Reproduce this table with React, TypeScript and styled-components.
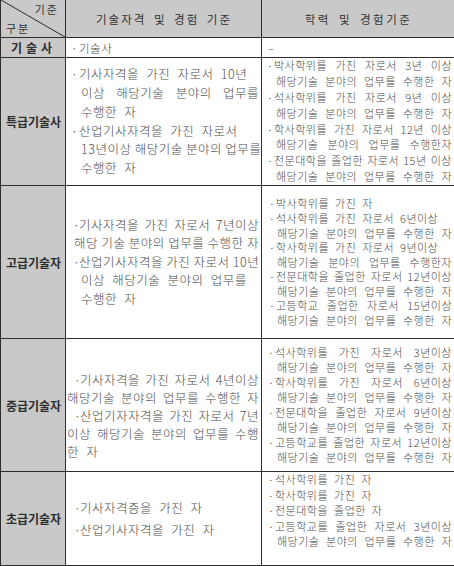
import React from "react";
import styled, { createGlobalStyle } from "styled-components";

const GlobalStyle = createGlobalStyle`
  html, body {
    margin: 0;
    padding: 0;
    background: #fff;
  }
  body {
    font-family: "Noto Sans CJK KR", "Noto Sans", sans-serif;
    color: #4a4a4a;
  }
`;

const Table = styled.table`
  width: 454px;
  border-collapse: collapse;
  table-layout: fixed;

  tr:first-child td {
    border-top: 0;
  }
`;

const Col = styled.col<{ $w: number }>`
  width: ${({ $w }) => $w}px;
`;

const Row = styled.tr<{ $h: number }>`
  height: ${({ $h }) => $h}px;
`;

const Cell = styled.td<{ $shade?: boolean; $pt?: number; $pb?: number; $top?: boolean }>`
  border: 1px solid #2e2e2e;
  padding: ${({ $pt }) => $pt || 0}px 0 ${({ $pb }) => $pb || 0}px 1px;
  background: ${({ $shade }) => ($shade ? "#c9c9c9" : "#fff")};
  vertical-align: ${({ $top }) => ($top ? "top" : "middle")};
  overflow: hidden;
`;

const CornerCell = styled.td`
  position: relative;
  border: 1px solid #2e2e2e;
  border-top: 0;
  padding: 0;
  background: #c9c9c9;
`;

const Diagonal = styled.svg`
  position: absolute;
  inset: 0;
  width: 100%;
  height: 100%;
`;

const Corner = styled.div`
  position: relative;
  display: flex;
  flex-direction: column;
  justify-content: space-between;
  height: 37px;
  padding: 2px 6px 1px 5px;
  box-sizing: border-box;
  font-size: 11px;
  letter-spacing: 2px;
  color: #333;
  line-height: 15px;
`;

const CornerTop = styled.span`
  align-self: flex-end;
`;

const CornerBottom = styled.span`
  align-self: flex-start;
`;

const HeadText = styled.div<{ $spacing: number }>`
  text-align: center;
  font-size: 11.5px;
  letter-spacing: ${({ $spacing }) => $spacing}px;
  word-spacing: 3px;
  color: #333;
`;

const Label = styled.div<{ $spacing?: number }>`
  text-align: center;
  font-size: 12px;
  font-weight: 700;
  color: #2e2e2e;
  letter-spacing: ${({ $spacing }) => $spacing || 0}px;
  white-space: nowrap;
`;

const Block = styled.div<{ $size: number; $lh: number; $ws: number; $ls: number }>`
  font-size: ${({ $size }) => $size}px;
  line-height: ${({ $lh }) => $lh}px;
  word-spacing: ${({ $ws }) => $ws}px;
  letter-spacing: ${({ $ls }) => $ls}px;
  font-weight: 300;
  color: #4d4d4d;
`;

const FirstLine = styled.div<{ $dot: number }>`
  display: flex;
  padding-left: ${({ $dot }) => $dot}px;
  padding-right: 2px;
`;

const Dot = styled.span<{ $w: number }>`
  flex: none;
  width: ${({ $w }) => $w}px;
  letter-spacing: 0;
`;

const NextLine = styled.div<{ $indent: number }>`
  display: flex;
  padding-left: ${({ $indent }) => $indent}px;
  padding-right: 2px;
`;

const Text = styled.span<{ $full?: boolean }>`
  flex: 1;
  min-width: 0;
  white-space: nowrap;
  ${({ $full }) =>
    $full
      ? `
    word-spacing: 0;
    text-align: justify;
    text-align-last: justify;
  `
      : `
    text-align: left;
  `}
`;

type Line = { t: string; full?: boolean };
type Item = { lines: Line[]; cont?: number };

const L = (t: string, full = false): Line => ({ t, full });

type EntriesProps = {
  items: Item[];
  size: number;
  lh: number;
  ws: number;
  ls: number;
  dot: number;
  text: number;
  cont: number;
};

function Entries({ items, size, lh, ws, ls, dot, text, cont }: EntriesProps) {
  return (
    <Block $size={size} $lh={lh} $ws={ws} $ls={ls}>
      {items.map((item, k) => (
        <React.Fragment key={k}>
          {item.lines.map((ln, i) =>
            i === 0 ? (
              <FirstLine key={i} $dot={dot}>
                <Dot $w={text - dot}>·</Dot>
                <Text $full={ln.full}>{ln.t}</Text>
              </FirstLine>
            ) : (
              <NextLine key={i} $indent={item.cont ?? cont}>
                <Text $full={ln.full}>{ln.t}</Text>
              </NextLine>
            )
          )}
        </React.Fragment>
      ))}
    </Block>
  );
}

const SUFFIX = "해당기술 분야의 업무를 수행한 자";

// shared type settings for the two content columns
const QUAL = { size: 12.5, ws: 4, ls: 0.5 };
const EDU = { size: 11, ws: 3, ls: 0.5 };

export default function App() {
  return (
    <>
      <GlobalStyle />
      <Table>
        <colgroup>
          <Col $w={65} />
          <Col $w={196} />
          <Col $w={193} />
        </colgroup>
        <tbody>
          <Row $h={37}>
            <CornerCell>
              <Diagonal viewBox="0 0 64 37" preserveAspectRatio="none">
                <line x1="0" y1="0" x2="64" y2="37" stroke="#2a2a2a" strokeWidth="1" />
              </Diagonal>
              <Corner>
                <CornerTop>기준</CornerTop>
                <CornerBottom>구분</CornerBottom>
              </Corner>
            </CornerCell>
            <Cell $shade>
              <HeadText $spacing={2}>기술자격 및 경험 기준</HeadText>
            </Cell>
            <Cell $shade>
              <HeadText $spacing={2.5}>학력 및 경험기준</HeadText>
            </Cell>
          </Row>

          <Row $h={20}>
            <Cell $shade>
              <Label $spacing={4}>기술사</Label>
            </Cell>
            <Cell>
              <Entries items={[{ lines: [L("기술사")] }]} size={11.5} lh={18} ws={3} ls={0.5} dot={4} text={12} cont={14} />
            </Cell>
            <Cell>
              <Block $size={11} $lh={18} $ws={0} $ls={0}>
                <NextLine $indent={5}>
                  <Text>–</Text>
                </NextLine>
              </Block>
            </Cell>
          </Row>

          <Row $h={128}>
            <Cell $shade>
              <Label>특급기술사</Label>
            </Cell>
            <Cell>
              <Entries
                {...QUAL}
                lh={18.8}
                dot={4}
                text={12}
                cont={14}
                items={[
                  { lines: [L("기사자격을 가진 자로서 10년"), L("이상 해당기술 분야의 업무를", true), L("수행한 자")] },
                  { lines: [L("산업기사자격을 가진 자로서"), L("13년이상 해당기술 분야의 업무를", true), L("수행한 자")] },
                ]}
              />
            </Cell>
            <Cell>
              <Entries
                {...EDU}
                lh={15.8}
                dot={4}
                text={11}
                cont={13}
                items={[
                  { lines: [L("박사학위를 가진 자로서 3년 이상", true), L(SUFFIX, true)] },
                  { lines: [L("석사학위를 가진 자로서 9년 이상", true), L(SUFFIX, true)] },
                  { lines: [L("학사학위를 가진 자로서 12년 이상", true), L("해당기술 분야의 업무를 수행한자", true)] },
                  { lines: [L("전문대학을 졸업한 자로서 15년 이상", true), L(SUFFIX, true)] },
                ]}
              />
            </Cell>
          </Row>

          <Row $h={153}>
            <Cell $shade>
              <Label>고급기술자</Label>
            </Cell>
            <Cell>
              <Entries
                {...QUAL}
                lh={18.5}
                dot={6}
                text={12}
                cont={14}
                items={[
                  { lines: [L("기사자격을 가진 자로서 7년이상", true), L("해당 기술 분야의 업무를 수행한 자", true)], cont: 7 },
                  { lines: [L("산업기사자격을 가진 자로서 10년", true), L("이상 해당기술 분야의 업무를"), L("수행한 자")] },
                ]}
              />
            </Cell>
            <Cell>
              <Entries
                {...EDU}
                lh={14.6}
                dot={6}
                text={13}
                cont={14}
                items={[
                  { lines: [L("박사학위를 가진 자")] },
                  { lines: [L("석사학위를 가진 자로서 6년이상"), L(SUFFIX, true)] },
                  { lines: [L("학사학위를 가진 자로서 9년이상"), L("해당기술 분야의 업무를 수행한자", true)] },
                  { lines: [L("전문대학을 졸업한 자로서 12년이상", true), L(SUFFIX, true)] },
                  { lines: [L("고등학교 졸업한 자로서 15년이상", true), L(SUFFIX, true)] },
                ]}
              />
            </Cell>
          </Row>

          <Row $h={133}>
            <Cell $shade>
              <Label>중급기술자</Label>
            </Cell>
            <Cell $pt={22}>
              <Entries
                {...QUAL}
                lh={18}
                dot={7}
                text={13}
                cont={0}
                items={[
                  { lines: [L("기사자격을 가진 자로서 4년이상", true), L(SUFFIX, true)] },
                  { lines: [L("산업기자자격을 가진 자로서 7년", true), L("이상 해당기술 분야의 업무를 수행", true), L("한 자")] },
                ]}
              />
            </Cell>
            <Cell>
              <Entries
                {...EDU}
                lh={14.9}
                dot={5}
                text={12}
                cont={14}
                items={[
                  { lines: [L("석사학위를 가진 자로서 3년이상", true), L(SUFFIX, true)] },
                  { lines: [L("학사학위를 가진 자로서 6년이상", true), L(SUFFIX, true)] },
                  { lines: [L("전문대학을 졸업한 자로서 9년이상", true), L(SUFFIX, true)] },
                  { lines: [L("고등학교를 졸업한 자로서 12년이상", true), L(SUFFIX, true)] },
                ]}
              />
            </Cell>
          </Row>

          <Row $h={94}>
            <Cell $shade>
              <Label>초급기술자</Label>
            </Cell>
            <Cell>
              <Entries
                {...QUAL}
                lh={22}
                dot={7}
                text={13}
                cont={14}
                items={[{ lines: [L("기사자격증을 가진 자")] }, { lines: [L("산업기사자격을 가진 자")] }]}
              />
            </Cell>
            <Cell $top>
              <Entries
                {...EDU}
                lh={15.5}
                dot={5}
                text={12}
                cont={14}
                items={[
                  { lines: [L("석사학위를 가진 자")] },
                  { lines: [L("학사학위를 가진 자")] },
                  { lines: [L("전문대학을 졸업한 자")] },
                  { lines: [L("고등학교를 졸업한 자로서 3년이상", true), L(SUFFIX, true)] },
                ]}
              />
            </Cell>
          </Row>
        </tbody>
      </Table>
    </>
  );
}
